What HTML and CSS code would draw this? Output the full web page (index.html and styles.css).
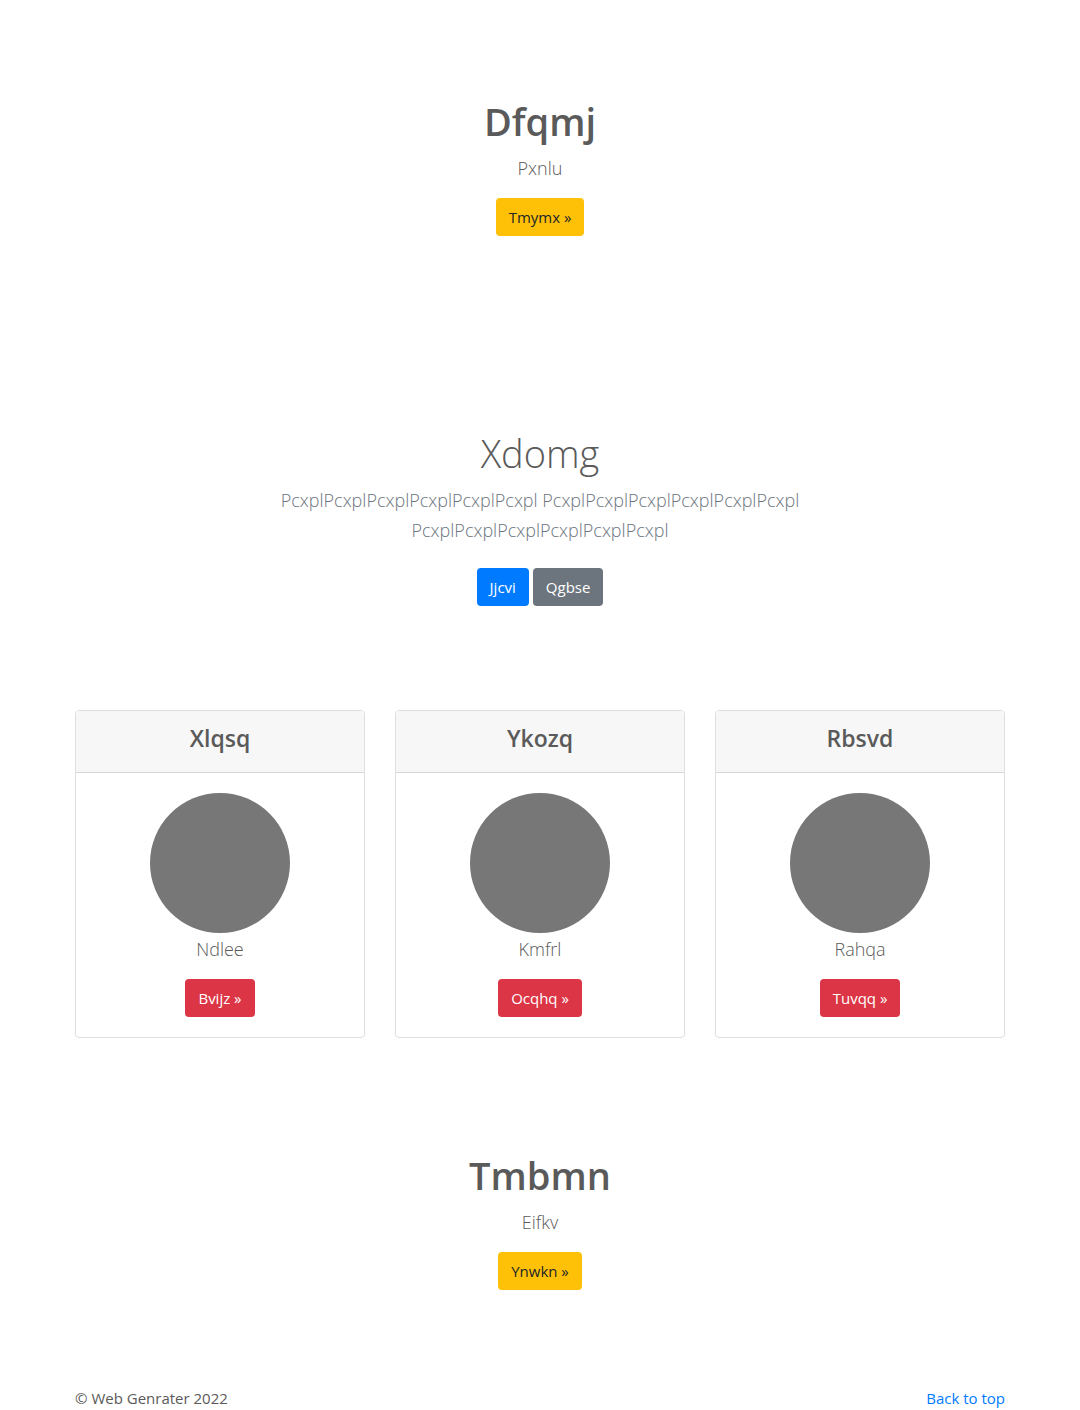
FILE: index.html
```html
<!DOCTYPE html>
<html lang="en">
<head>
<meta charset="utf-8">
<meta name="viewport" content="width=device-width, initial-scale=1">
<title>Web Genrater</title>
<link rel="stylesheet" href="styles.css">
</head>
<body id="top">
<main>
  <section class="hero">
    <h1 class="hero-title">Dfqmj</h1>
    <p class="lead">Pxnlu</p>
    <button type="button" class="btn btn-warning">Tmymx »</button>
  </section>
  <section class="intro">
    <h2 class="intro-title">Xdomg</h2>
    <p class="lead intro-text">PcxplPcxplPcxplPcxplPcxplPcxpl PcxplPcxplPcxplPcxplPcxplPcxpl PcxplPcxplPcxplPcxplPcxplPcxpl</p>
    <div class="actions">
      <button type="button" class="btn btn-primary">Jjcvi</button>
      <button type="button" class="btn btn-secondary">Qgbse</button>
    </div>
  </section>
  <section class="container cards">
    <article class="card">
      <header class="card-header"><h3 class="card-title">Xlqsq</h3></header>
      <div class="card-body">
        <div class="avatar"></div>
        <p class="lead">Ndlee</p>
        <button type="button" class="btn btn-danger">Bvijz »</button>
      </div>
    </article>
    <article class="card">
      <header class="card-header"><h3 class="card-title">Ykozq</h3></header>
      <div class="card-body">
        <div class="avatar"></div>
        <p class="lead">Kmfrl</p>
        <button type="button" class="btn btn-danger">Ocqhq »</button>
      </div>
    </article>
    <article class="card">
      <header class="card-header"><h3 class="card-title">Rbsvd</h3></header>
      <div class="card-body">
        <div class="avatar"></div>
        <p class="lead">Rahqa</p>
        <button type="button" class="btn btn-danger">Tuvqq »</button>
      </div>
    </article>
  </section>
  <section class="closing">
    <h2 class="hero-title">Tmbmn</h2>
    <p class="lead">Eifkv</p>
    <button type="button" class="btn btn-warning">Ynwkn »</button>
  </section>
</main>
<footer class="container footer">
  <span>© Web Genrater 2022</span>
  <a href="#top">Back to top</a>
</footer>
</body>
</html>
```

FILE: styles.css
```css
*, *::before, *::after {
  box-sizing: border-box;
}

body {
  margin: 0;
  background: #fff;
  color: #5a5a5a;
  font-family: "Segoe UI", "Open Sans", "Noto Sans", sans-serif;
  font-size: 15px;
  line-height: 24px;
}

h1, h2, h3, p {
  margin: 0;
}

.container {
  width: 100%;
  max-width: 960px;
  margin: 0 auto;
  padding: 0 15px;
}

.hero,
.intro,
.closing {
  display: flex;
  flex-direction: column;
  align-items: center;
  padding: 96px 15px;
  text-align: center;
}

.hero {
  padding-bottom: 192px;
}

.intro {
  padding-top: 0;
  padding-bottom: 104px;
}

.hero-title,
.intro-title {
  margin-bottom: 7px;
  font-size: 38px;
  font-weight: 600;
  line-height: 50px;
}

.intro-title {
  font-weight: 300;
}

.lead {
  margin-bottom: 15px;
  font-size: 18px;
  font-weight: 300;
  line-height: 30px;
}

.intro-text {
  max-width: 560px;
  margin-bottom: 23px;
  color: #6c757d;
}

.actions {
  display: flex;
  gap: 4px;
}

.btn {
  height: 38px;
  padding: 6px 12px;
  border: 1px solid transparent;
  border-radius: 4px;
  font: inherit;
  cursor: pointer;
}

.btn-warning {
  background: #ffc107;
  color: #212529;
}

.btn-primary {
  background: #007bff;
  color: #fff;
}

.btn-secondary {
  background: #6c757d;
  color: #fff;
}

.btn-danger {
  background: #dc3545;
  color: #fff;
}

.cards {
  display: grid;
  grid-template-columns: repeat(3, 1fr);
  gap: 30px;
}

.card {
  overflow: hidden;
  border: 1px solid #dfdfdf;
  border-radius: 4px;
  text-align: center;
}

.card-header {
  padding: 12px 20px 19px;
  border-bottom: 1px solid #d8d8d8;
  background: #f7f7f7;
}

.card-title {
  font-size: 23px;
  font-weight: 600;
  line-height: 30px;
}

.card-body {
  display: flex;
  flex-direction: column;
  align-items: center;
  padding: 20px;
}

.avatar {
  width: 140px;
  height: 140px;
  margin-bottom: 1px;
  border-radius: 50%;
  background: #777;
}

.closing {
  padding-top: 112px;
}

.footer {
  display: flex;
  justify-content: space-between;
}

.footer a {
  color: #007bff;
  text-decoration: none;
}
```
